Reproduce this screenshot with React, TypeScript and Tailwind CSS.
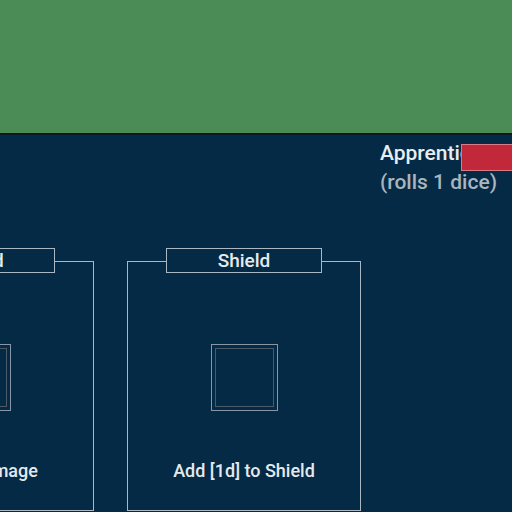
import React from "react";

function Card({ title, text }: { title: string; text: string }) {
  return (
    <div className="relative w-[234px] h-[250px] shrink-0 border border-[#aab8c4] flex flex-col items-center">
      <div className="absolute -top-[14px] left-1/2 -translate-x-1/2 w-[156px] h-[25px] border border-[#aab8c4] bg-[#052a45] flex items-center justify-center text-[19px] leading-none font-medium text-[#e6ebef]">
        {title}
      </div>
      <div className="mt-[82px] w-[67px] h-[67px] border border-[#8797a5] p-[3px]">
        <div className="w-full h-full border border-[#4a5b68]" />
      </div>
      <div className="mt-[48px] text-[18px] leading-[24px] font-medium text-[#e3e9ee] whitespace-nowrap">{text}</div>
    </div>
  );
}

export default function App() {
  return (
    <div className="w-[512px] h-[512px] overflow-hidden bg-[#052a45] font-['Roboto',sans-serif]">
      <div className="h-[133px] bg-[#4b8b55]" />
      <div className="h-[2px] bg-[#0c1821]" />
      <div className="flex">
        <div className="w-[520px] -ml-[140px] shrink-0 flex gap-[33px] pt-[126px]">
          <Card title="Sword" text="[1d] to Damage" />
          <Card title="Shield" text="Add [1d] to Shield" />
        </div>
        <div className="relative flex-1 pt-[4px] text-[21px] leading-[29px] font-medium whitespace-nowrap">
          <div className="text-[#e8edf1]">Apprentice</div>
          <div className="text-[#a9b5bf]">(rolls 1 dice)</div>
          <div className="absolute left-[81px] top-[9px] w-[60px] h-[27px] bg-[#c1283a] border border-[#d77a86]" />
        </div>
      </div>
    </div>
  );
}
